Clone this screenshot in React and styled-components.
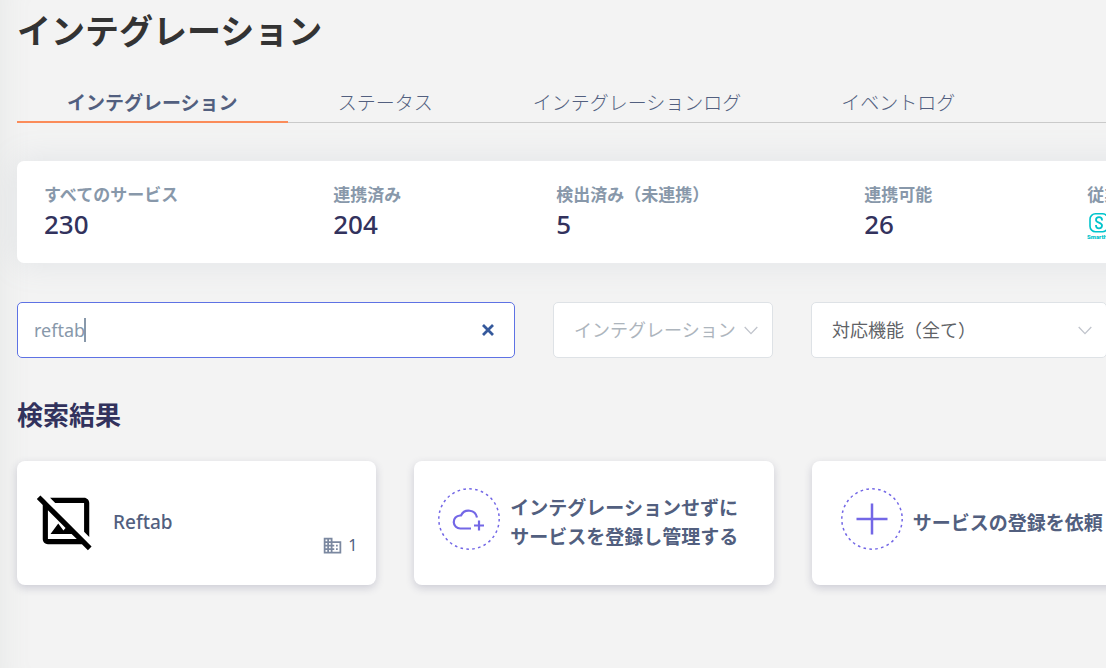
import React, { useState } from 'react'
import styled, { createGlobalStyle } from 'styled-components'
import { MdOutlineImageNotSupported, MdBusiness } from 'react-icons/md'

const GlobalStyle = createGlobalStyle`
    * {
        box-sizing: border-box;
    }
    body {
        margin: 0;
        background-color: #f3f3f3;
        font-family: "Noto Sans", "Noto Sans CJK JP", sans-serif;
        color: #525f7f;
        overflow-x: hidden;
    }
`;

const Page = styled.div`
    min-height: 100vh;
    overflow: hidden;
    box-shadow: inset 32px 0 32px -32px rgba(136, 160, 150, 0.12);
`;

const Main = styled.main`
    min-width: 1188px;
    padding: 7px 17px;
`;

const Title = styled.h1`
    margin: 0;
    font-size: 34px;
    line-height: 48px;
    font-weight: 700;
    color: #333333;
`;

const Tabs = styled.nav`
    display: flex;
    margin-top: 28px;
    height: 40px;
    border-bottom: 1px solid #cacaca;
`;

const Tab = styled.a`
    height: 40px;
    padding: 0 50px;
    font-size: 19px;
    line-height: 41px;
    white-space: nowrap;
    text-decoration: none;
    color: #525f7f;
    font-weight: ${props => props.$active ? 700 : 300};
    border-bottom: 2px solid ${props => props.$active ? "#fb8c5a" : "transparent"};
`;

const Stats = styled.dl`
    display: flex;
    gap: 155px;
    height: 102px;
    margin: 38px 0 0;
    padding: 21px 27px;
    background-color: white;
    border-radius: 7px;
    box-shadow: 0 0 32px rgba(136, 152, 170, 0.17);
`;

const Stat = styled.div`
    white-space: nowrap;
`;

const StatLabel = styled.dt`
    font-size: 17px;
    line-height: 26px;
    font-weight: 700;
    color: #8898aa;
`;

const StatValue = styled.dd`
    margin: 0;
    font-size: 26px;
    line-height: 32px;
    font-weight: 500;
    color: #32325d;
`;

const Filters = styled.form`
    display: grid;
    grid-template-columns: 498fr 220fr 296fr 26fr;
    column-gap: 38px;
    margin-top: 39px;
`;

const Field = styled.div`
    position: relative;
    height: 56px;
`;

const SearchInput = styled.input`
    width: 100%;
    height: 56px;
    padding: 0 48px 0 16px;
    border: 1px solid #5e72e4;
    border-radius: 5px;
    outline: none;
    background-color: white;
    font-family: inherit;
    font-size: 18px;
    color: #8898aa;
    caret-color: transparent;
`;

const Caret = styled.span`
    position: absolute;
    top: 16px;
    left: 67px;
    width: 2px;
    height: 24px;
    background-color: #8898aa;
`;

const ClearButton = styled.button`
    position: absolute;
    top: 16px;
    right: 15px;
    display: flex;
    align-items: center;
    justify-content: center;
    width: 24px;
    height: 24px;
    padding: 0;
    border: none;
    background: none;
    cursor: pointer;
`;

const Select = styled.select`
    appearance: none;
    width: 100%;
    height: 56px;
    padding: 0 34px 0 20px;
    border: 1px solid #dee2e6;
    border-radius: 5px;
    background-color: white;
    font-family: inherit;
    font-size: 18px;
    color: ${props => props.disabled ? "#adb5bd" : "#606266"};
    opacity: 1;
`;

const SelectArrow = styled.svg`
    position: absolute;
    top: 24px;
    right: 15px;
    pointer-events: none;
`;

const SectionTitle = styled.h2`
    margin: 38px 0 0;
    font-size: 26px;
    line-height: 38px;
    font-weight: 700;
    color: #32325d;
`;

const Cards = styled.div`
    display: grid;
    grid-template-columns: repeat(3, 1fr);
    gap: 38px;
    margin-top: 27px;
`;

const Card = styled.button`
    position: relative;
    display: flex;
    align-items: center;
    height: 124px;
    padding: 0 ${props => props.$wide ? "29px" : "24px"};
    border: none;
    border-radius: 8px;
    background-color: white;
    box-shadow: 0 3px 8px rgba(50, 50, 93, 0.2);
    font-family: inherit;
    font-size: 19px;
    line-height: 29px;
    font-weight: 400;
    text-align: left;
    color: #525f7f;
    cursor: pointer;
`;

const ServiceCard = styled(Card)`
    padding: 0 18px;
    gap: 16px;
`;

const ServiceName = styled.span`
    font-size: 19px;
    font-weight: 500;
    padding-bottom: 2px;
`;

const ServiceIcon = styled.span`
    display: flex;
    padding-bottom: 4px;
`;

const ActionIcon = styled.svg`
    flex: none;
    margin-bottom: 8px;
`;

const CardText = styled.span`
    margin-left: 10px;
    font-weight: 700;
    white-space: nowrap;
`;

const Count = styled.span`
    position: absolute;
    right: 19px;
    bottom: 26px;
    display: flex;
    align-items: center;
    gap: 5px;
    font-size: 16px;
    line-height: 28px;
    color: #525f7f;

    svg {
        color: #7b88a0;
    }
`;

const HrLogo = styled.svg`
    display: block;
    margin-top: 4px;
`;

const services = [
    { label: "すべてのサービス", value: 230 },
    { label: "連携済み", value: 204 },
    { label: "検出済み（未連携）", value: 5 },
    { label: "連携可能", value: 26 },
];

const tabs = ["インテグレーション", "ステータス", "インテグレーションログ", "イベントログ"];

const Chevron = () => (
    <SelectArrow width="14" height="9" viewBox="0 0 14 9" fill="none" stroke="#c0c4cc" strokeWidth="1.3">
        <path d="M.7 1 7 7.6 13.3 1" />
    </SelectArrow>
)

const DottedCircle = ({ children }) => (
    <ActionIcon width="62" height="62" viewBox="0 0 62 62" fill="none" stroke="#7367e6">
        <circle cx="31" cy="31" r="30.2" strokeWidth="1.5" strokeDasharray="2.6 3.33" />
        {children}
    </ActionIcon>
)

function App() {
    const [keyword, setKeyword] = useState("reftab")

  return (
    <Page>
        <GlobalStyle/>
        <Main>
            <Title>インテグレーション</Title>
            <Tabs>
                {tabs.map((tab, i) => (
                    <Tab key={tab} href="#" $active={i === 0}>{tab}</Tab>
                ))}
            </Tabs>
            <Stats>
                {services.map((item) => (
                    <Stat key={item.label}>
                        <StatLabel>{item.label}</StatLabel>
                        <StatValue>{item.value}</StatValue>
                    </Stat>
                ))}
                <Stat>
                    <StatLabel>従業員</StatLabel>
                    <StatValue>
                        <HrLogo width="30" height="30" viewBox="1 0 30 30" role="img" aria-label="SmartHR">
                            <rect x="4" y="1.7" width="18" height="18" rx="5.5" fill="none" stroke="#00c4cc" strokeWidth="1.6" />
                            <path d="M16 8.600V8a3 2.800 0 0 0-6 0C10 11 16 10.400 16 13.500a3 2.800 0 0 1-6 0V13" fill="none" stroke="#00c4cc" strokeWidth="1.8" />
                            <text x="1" y="27" fontFamily="Roboto, sans-serif" fontSize="6" fontWeight="900" fill="#00c4cc">SmartHR</text>
                        </HrLogo>
                    </StatValue>
                </Stat>
            </Stats>
            <Filters onSubmit={(e) => e.preventDefault()}>
                <Field>
                    <SearchInput aria-label="検索" value={keyword} onChange={(e) => setKeyword(e.target.value)} />
                    {keyword === "reftab" && <Caret/>}
                    <ClearButton type="button" aria-label="クリア" onClick={() => setKeyword("")}>
                        <svg width="12" height="12" viewBox="0 0 12 12" stroke="#35599c" strokeWidth="2.8">
                            <path d="M1 1 11 11M11 1 1 11" />
                        </svg>
                    </ClearButton>
                </Field>
                <Field>
                    <Select aria-label="インテグレーション" disabled>
                        <option>インテグレーション</option>
                    </Select>
                    <Chevron/>
                </Field>
                <Field>
                    <Select aria-label="対応機能">
                        <option>対応機能（全て）</option>
                    </Select>
                    <Chevron/>
                </Field>
            </Filters>
            <SectionTitle>検索結果</SectionTitle>
            <Cards>
                <ServiceCard>
                    <ServiceIcon><MdOutlineImageNotSupported size={62} color="black"/></ServiceIcon>
                    <ServiceName>Reftab</ServiceName>
                    <Count><MdBusiness size={21}/>1</Count>
                </ServiceCard>
                <Card>
                    <DottedCircle>
                        <path d="M33 40.500H22.500a6.500 6.500 0 0 1-.5-13H23a8.500 8.500 0 0 1 16 2" strokeWidth="2.200" />
                        <path d="M41 32.500v10M36 37.500h10" strokeWidth="2.200" />
                    </DottedCircle>
                    <CardText>インテグレーションせずに<br/>サービスを登録し管理する</CardText>
                </Card>
                <Card $wide>
                    <DottedCircle>
                        <path d="M31 15.500v31M15.500 31h31" strokeWidth="2.500" />
                    </DottedCircle>
                    <CardText>サービスの登録を依頼</CardText>
                </Card>
            </Cards>
        </Main>
    </Page>
  )
}

export default App
